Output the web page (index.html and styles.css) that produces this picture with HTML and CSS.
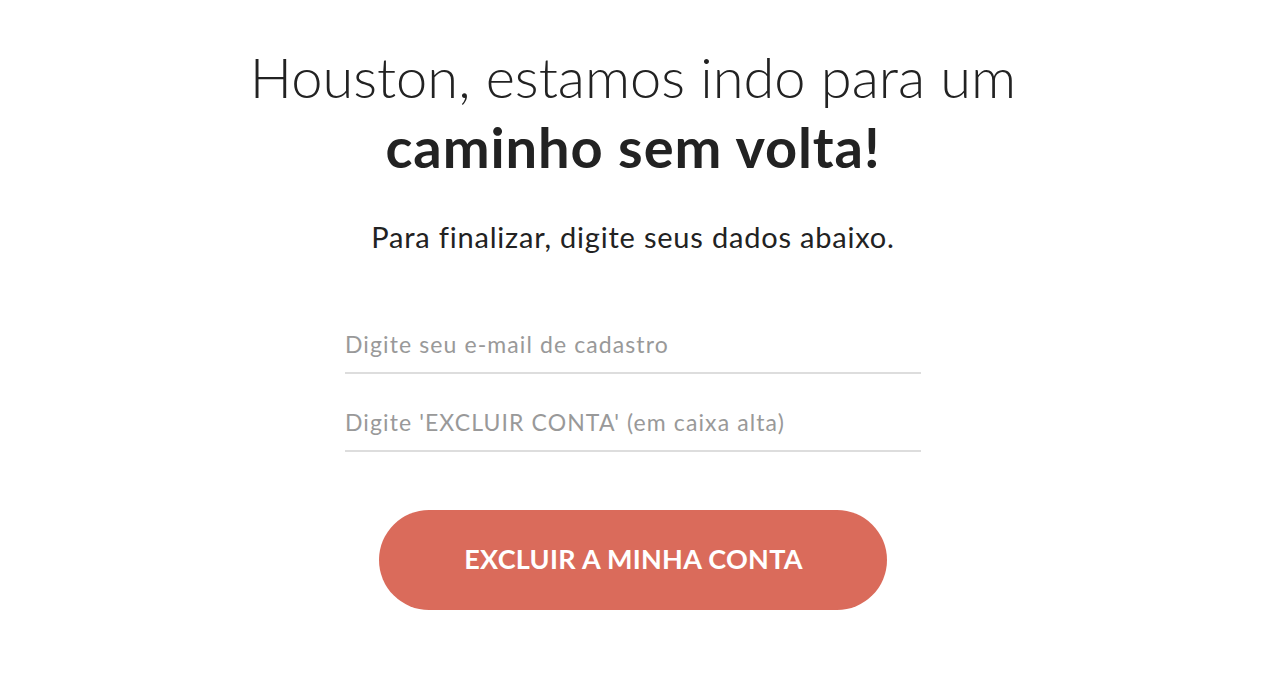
FILE: index.html
```html
<!DOCTYPE html>
<html lang="pt-BR">
<head>
    <meta charset="UTF-8">
    <meta name="viewport" content="width=device-width, initial-scale=1.0">
    <title>Excluir conta</title>
    <link rel="stylesheet" href="styles.css">
</head>
<body>
    <div class="container">
        <h1 class="title">Houston, estamos indo para um <strong>caminho sem volta!</strong></h1>
        <p class="subtitle">Para finalizar, digite seus dados abaixo.</p>
        <form class="delete-form">
            <input type="email" class="field" placeholder="Digite seu e-mail de cadastro">
            <input type="text" class="field" placeholder="Digite 'EXCLUIR CONTA' (em caixa alta)">
            <button type="submit" class="btn-delete">EXCLUIR A MINHA CONTA</button>
        </form>
    </div>
</body>
</html>
```

FILE: styles.css
```css
body {
    font-family: Lato, "Open Sans", sans-serif;
    background-color: #ffffff;
    color: #222222;
    margin: 0;
    padding: 0;
}
.container {
    width: 800px;
    margin: 0 auto;
    padding-top: 42px;
    text-align: center;
}
.title {
    font-size: 56px;
    font-weight: 300;
    line-height: 70px;
    margin: 0 auto;
    width: 780px;
}
.title strong {
    display: block;
    font-weight: 700;
    letter-spacing: 0.9px;
}
.subtitle {
    font-size: 29px;
    letter-spacing: 0.8px;
    margin: 40px 0 0;
    line-height: 30px;
}
.delete-form {
    display: flex;
    flex-direction: column;
    align-items: center;
    margin-top: 72px;
}
.field {
    width: 576px;
    box-sizing: border-box;
    border: none;
    border-bottom: 2px solid #dddddd;
    padding: 2px 0 10px;
    margin-bottom: 28px;
    font-family: inherit;
    font-size: 23px;
    letter-spacing: 1.1px;
    line-height: 36px;
    color: #222222;
    outline: none;
}
.field::placeholder {
    color: #999999;
}
.btn-delete {
    width: 508px;
    height: 100px;
    margin-top: 30px;
    padding: 0 0 4px 1px;
    border: none;
    border-radius: 50px;
    background-color: #da6b5b;
    color: #ffffff;
    font-family: inherit;
    font-size: 27px;
    font-weight: 700;
    letter-spacing: 0.3px;
    cursor: pointer;
}
```
